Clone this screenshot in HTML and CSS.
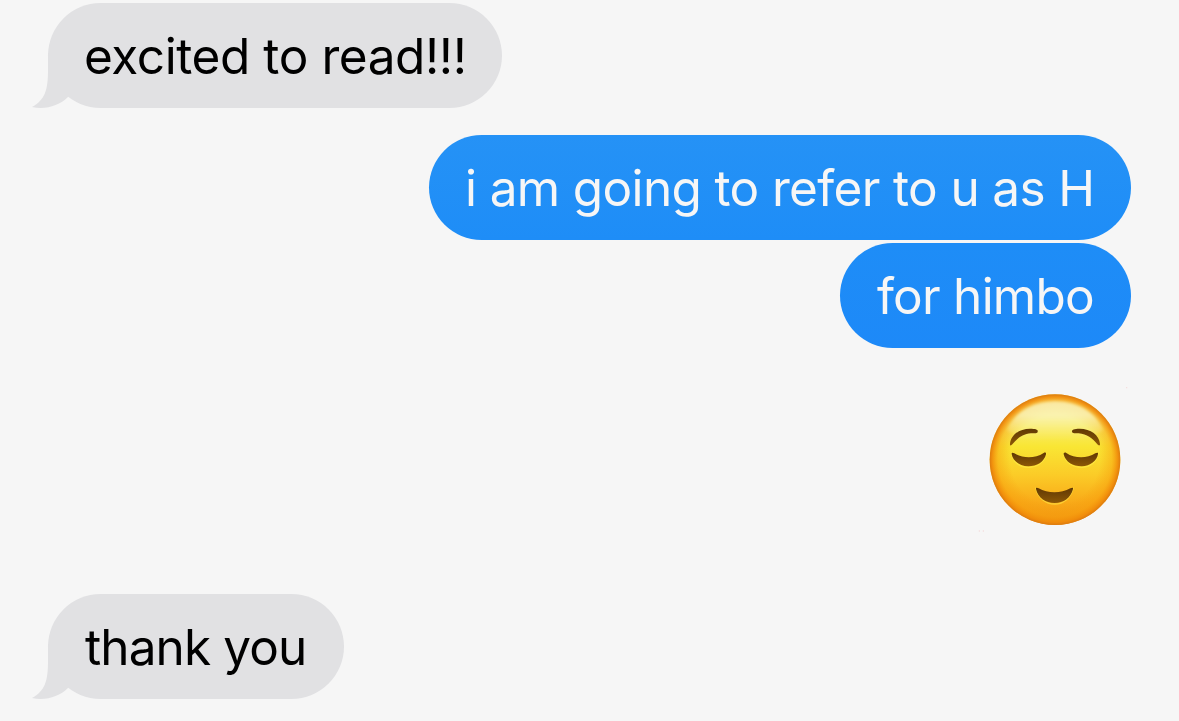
FILE: index.html
```html
<!DOCTYPE html>
<html lang="en">
<head>
  <meta charset="UTF-8">
  <title>Messages</title>
  <link rel="stylesheet" href="styles.css">
</head>
<body>

<main class="thread">
  <div class="bubble received excited">
    <svg class="tail" width="60" height="55" viewBox="0 0 60 55"><path d="M16 0V17C16 37 13 47 0 54C13 57 27 53 36 44L60 20V0Z"/></svg>
    <span class="text">excited to read!!!</span>
  </div>

  <div class="bubble sent refer"><span class="text">i am going to refer to u as H</span></div>
  <div class="bubble sent himbo"><span class="text">for himbo</span></div>

  <!-- relieved face -->
  <svg class="emoji" width="160" height="160" viewBox="0 0 480 480">
    <defs>
      <linearGradient id="face" x1="0" y1="0" x2="0" y2="1">
        <stop offset="0" stop-color="#fbe56a"/>
        <stop offset=".18" stop-color="#f8ee7c"/>
        <stop offset=".4" stop-color="#f9e634"/>
        <stop offset=".62" stop-color="#fbcb27"/>
        <stop offset=".82" stop-color="#f9ab19"/>
        <stop offset="1" stop-color="#ef9210"/>
      </linearGradient>
      <radialGradient id="edge" cx=".5" cy=".5" r=".5">
        <stop offset=".68" stop-color="#f59b0c" stop-opacity="0"/>
        <stop offset=".87" stop-color="#f79d0c" stop-opacity=".45"/>
        <stop offset=".96" stop-color="#f08a0a" stop-opacity=".9"/>
        <stop offset="1" stop-color="#db7a10"/>
      </radialGradient>
      <linearGradient id="shine" x1="0" y1="0" x2="0" y2="1">
        <stop offset="0" stop-color="#faf4c4" stop-opacity=".75"/>
        <stop offset=".35" stop-color="#faf4bc" stop-opacity=".8"/>
        <stop offset="1" stop-color="#faf080" stop-opacity="0"/>
      </linearGradient>
      <filter id="soft"><feGaussianBlur stdDeviation="5"/></filter>
      <linearGradient id="brown" x1="0" y1="0" x2="0" y2="1">
        <stop offset="0" stop-color="#603804"/>
        <stop offset="1" stop-color="#8c5806"/>
      </linearGradient>
    </defs>
    <circle cx="240" cy="239" r="196" fill="url(#face)"/>
    <circle cx="240" cy="239" r="196" fill="url(#edge)"/>
    <path filter="url(#soft)" fill="url(#shine)" d="M240 64C310 64 362 98 384 150C350 176 295 184 240 184C185 184 130 176 96 150C118 98 170 64 240 64Z"/>
    <g class="lowlight" transform="translate(0 3)">
      <path d="M110 218C140 238 184 239 213 219C208 246 185 259 160 259C133 258 113 242 110 218Z"/>
      <path d="M266 219C295 239 339 238 369 218C366 242 346 258 320 259C294 259 271 246 266 219Z"/>
      <path d="M183 323C216 343 261 343 294 323C287 352 265 369 239 369C213 369 189 352 183 323Z"/>
    </g>
    <g fill="url(#brown)">
      <path d="M105 192C107 165 133 146 165 146C182 146 190 149 188 155C187 161 180 159 168 160C143 162 127 175 112 193C108 198 104 197 105 192Z"/>
      <path d="M375 192C373 165 347 146 314 146C297 146 290 149 291 155C293 161 299 159 311 160C336 162 352 175 367 193C371 198 376 197 375 192Z"/>
      <path d="M110 222C109 217 114 217 118 220C144 236 180 236 206 219C211 216 214 219 213 223C208 246 185 259 160 259C133 258 113 242 110 222Z"/>
      <path d="M266 223C265 219 269 216 274 219C299 236 336 236 361 220C366 217 370 217 369 222C366 242 346 258 320 259C294 259 271 246 266 223Z"/>
      <path d="M183 327C182 322 187 322 191 325C218 341 258 341 286 325C291 322 295 322 294 327C287 354 265 369 239 369C213 369 189 354 183 327Z"/>
    </g>
    <g class="specks">
      <circle cx="455" cy="23" r="2"/>
      <circle cx="13" cy="453" r="2"/>
      <circle cx="25" cy="453" r="2"/>
    </g>
  </svg>

  <div class="bubble received thanks">
    <svg class="tail" width="60" height="55" viewBox="0 0 60 55"><path d="M16 0V17C16 37 13 47 0 54C13 57 27 53 36 44L60 20V0Z"/></svg>
    <span class="text">thank you</span>
  </div>
</main>

</body>
</html>
```

FILE: styles.css
```css
body {
  margin: 0;
  background-color: #f6f6f6;
  font-family: Inter, "Liberation Sans", sans-serif;
  overflow: hidden;
}
.thread {
  display: flex;
  flex-direction: column;
  height: 721px;
  box-sizing: border-box;
  padding: 3px 48px 0;
}
.bubble {
  position: relative;
  flex: none;
  box-sizing: border-box;
  height: 105px;
  padding: 0 36px;
  border-radius: 52.5px;
  font-size: 49.5px;
  line-height: 106px;
  white-space: nowrap;
}
.text {
  position: relative;
}
.received {
  align-self: flex-start;
  background-color: #e1e1e3;
  color: #000;
}
.sent {
  align-self: flex-end;
  color: #f6f6f6;
}
.tail {
  position: absolute;
  left: -16px;
  bottom: 0;
  fill: #e1e1e3;
}
.excited {
  width: 454px;
  letter-spacing: -0.42px;
}
.refer {
  width: 702px;
  margin-top: 27px;
  background: linear-gradient(#2592f6, #1e8df7);
  letter-spacing: -0.64px;
}
.himbo {
  width: 291px;
  margin-top: 3px;
  padding-left: 37px;
  background: linear-gradient(#1e8df7, #1d89f8);
  letter-spacing: -0.75px;
}
.emoji {
  align-self: flex-end;
  flex: none;
  margin: 32px -4px 0 0;
}
.lowlight {
  fill: none;
  stroke: #fff04a;
  stroke-width: 4;
  stroke-opacity: 0.55;
}
.specks {
  fill: #f3d9d9;
}
.thanks {
  width: 296px;
  margin-top: 54px;
  padding-left: 37px;
  letter-spacing: -0.9px;
}
```
